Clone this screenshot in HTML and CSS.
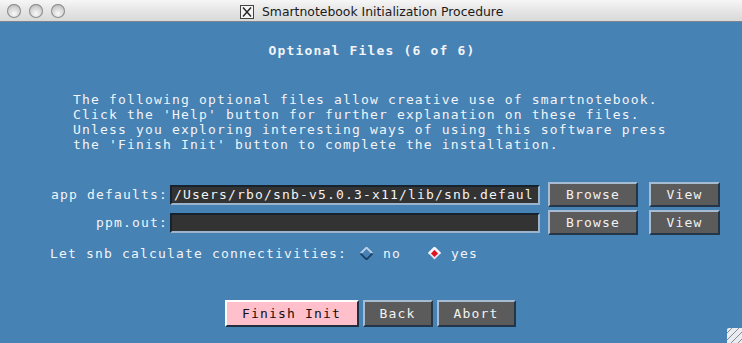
FILE: index.html
```html
<!DOCTYPE html>
<html lang="en">

<head>
    <meta charset="UTF-8" />
    <meta name="viewport" content="width=device-width, initial-scale=1.0" />
    <title>Smartnotebook Initialization Procedure</title>
    <link rel="stylesheet" href="styles.css">
</head>

<body>
    <!-- window title bar -->
    <div class="titlebar">
        <div class="lights">
            <span class="light"></span>
            <span class="light"></span>
            <span class="light"></span>
        </div>
        <div class="wintitle">
            <svg class="xicon" width="14" height="14" viewBox="0 0 14 14">
                <rect x="0.5" y="0.5" width="13" height="13" fill="#f4f4f4" stroke="#444" />
                <path d="M3 2.5 L11 11.5 M11 2.5 L3 11.5" stroke="#222" stroke-width="1.4" />
            </svg>
            <span>Smartnotebook Initialization Procedure</span>
        </div>
    </div>

    <div class="panel">
        <div class="heading">Optional Files (6 of 6)</div>

        <div class="intro">
            The following optional files allow creative use of smartnotebook.<br>
            Click the 'Help' button for further explanation on these files.<br>
            Unless you exploring interesting ways of using this software press<br>
            the 'Finish Init' button to complete the installation.
        </div>

        <!-- file rows -->
        <div class="files">
            <div class="file-row">
                <label class="file-label">app defaults:</label>
                <div class="entry">/Users/rbo/snb-v5.0.3-x11/lib/snb.defaul</div>
                <button class="xbtn browse">Browse</button>
                <button class="xbtn view">View</button>
            </div>
            <div class="file-row">
                <label class="file-label">ppm.out:</label>
                <div class="entry"></div>
                <button class="xbtn browse">Browse</button>
                <button class="xbtn view">View</button>
            </div>
        </div>

        <div class="radio-row">
            <span>Let snb calculate connectivities:</span>
            <span class="choice">
                <svg width="13" height="13" viewBox="0 0 13 13">
                    <path d="M6.5 0.5 L12.5 6.5 L6.5 12.5 L0.5 6.5 Z" fill="#4682b4" />
                    <path d="M0.5 6.5 L6.5 0.5 L12.5 6.5" fill="none" stroke="#bcd0ea" stroke-width="1.8" />
                    <path d="M0.5 6.5 L6.5 12.5 L12.5 6.5" fill="none" stroke="#1d3f66" stroke-width="1.8" />
                </svg>
                no
            </span>
            <span class="choice">
                <svg width="13" height="13" viewBox="0 0 13 13">
                    <path d="M6.5 0.5 L12.5 6.5 L6.5 12.5 L0.5 6.5 Z" fill="#e6e2f2" />
                    <path d="M0.5 6.5 L6.5 0.5 L12.5 6.5" fill="none" stroke="#f7f7fb" stroke-width="1.8" />
                    <path d="M6.5 3 L10 6.5 L6.5 10 L3 6.5 Z" fill="#e0101c" />
                </svg>
                yes
            </span>
        </div>

        <!-- bottom buttons -->
        <div class="actions">
            <button class="xbtn finish">Finish Init</button>
            <button class="xbtn back">Back</button>
            <button class="xbtn abort">Abort</button>
        </div>
    </div>

    <div class="grip"></div>
</body>

</html>
```

FILE: styles.css
```css
/* page */
body {
    margin: 0;
    width: 742px;
    height: 343px;
    overflow: hidden;
    position: relative;
    background-color: #4682b4;
    font-family: "DejaVu Sans Mono", "Liberation Mono", monospace;
    font-size: 13px;
    letter-spacing: 1.17px;
    color: #f2f4f8;
}

/* title bar */
.titlebar {
    height: 21px;
    border-bottom: 1px solid #7d8590;
    background: linear-gradient(to bottom, #f6f6f6, #e6e6e6 50%, #d9d9d9);
    display: flex;
    align-items: center;
    position: relative;
}

.lights {
    display: flex;
    gap: 8px;
    padding-left: 7px;
}

.light {
    width: 14px;
    height: 14px;
    border-radius: 50%;
    background: radial-gradient(circle at 50% 70%, #fafafa, #d0d0d0 55%, #a8a8a8);
    box-shadow: inset 0 0 0 1px #8c8c8c;
}

.wintitle {
    position: absolute;
    left: 240px;
    top: 4px;
    display: flex;
    align-items: center;
    gap: 8px;
    font-family: "DejaVu Sans", sans-serif;
    font-size: 12.4px;
    letter-spacing: 0;
    color: #1a1a1a;
}

/* content */
.panel {
    padding-top: 21px;
}

.heading {
    text-align: center;
    font-weight: bold;
    line-height: 15px;
    padding-left: 2px;
}

.intro {
    margin: 34px 0 0 73px;
    line-height: 15px;
}

.files {
    margin-top: 30px;
    display: flex;
    flex-direction: column;
    gap: 3px;
}

.file-row {
    display: flex;
    align-items: center;
    height: 25px;
}

.file-label {
    width: 128px;
    margin-left: 40px;
    padding-right: 2px;
    text-align: right;
    white-space: nowrap;
}

.entry {
    width: 364px;
    height: 16px;
    line-height: 16px;
    padding-left: 2px;
    background-color: #333333;
    border-style: solid;
    border-width: 2px;
    border-color: #16222e #9bb4cc #9bb4cc #16222e;
    white-space: nowrap;
    overflow: hidden;
    color: #f2f2f2;
}

/* raised X buttons */
.xbtn {
    font-family: inherit;
    font-size: 13px;
    letter-spacing: 1.17px;
    color: #f2f2f2;
    background-color: #5c5b5b;
    border-style: solid;
    border-width: 2px;
    border-color: #a7bcd2 #233546 #233546 #a7bcd2;
    padding: 0;
    height: 25px;
    cursor: pointer;
}

.browse {
    width: 90px;
    margin-left: 8px;
}

.view {
    width: 71px;
    margin-left: 11px;
}

.radio-row {
    margin: 8px 0 0 50px;
    height: 20px;
    display: flex;
    align-items: center;
}

.choice {
    display: flex;
    align-items: center;
    gap: 10px;
    margin-left: 13px;
}

.choice + .choice {
    margin-left: 27px;
}

.actions {
    margin-top: 37px;
    display: flex;
    justify-content: center;
    gap: 4px;
    padding-left: 0;
}

.actions .xbtn {
    height: 27px;
}

.finish {
    width: 134px;
    margin-left: -2px;
    background-color: #ffc0cb;
    color: #111;
    border-color: #ffffff #1f2f3f #1f2f3f #ffffff;
}

.back {
    width: 70px;
}

.abort {
    width: 79px;
}

/* resize grip */
.grip {
    position: absolute;
    right: 0;
    bottom: 0;
    width: 15px;
    height: 15px;
    background:
        repeating-linear-gradient(135deg, transparent 0 3px, #8a8a8a 3px 4px, transparent 4px 5px),
        #e8ecf2;
    border-top-left-radius: 2px;
}
```
